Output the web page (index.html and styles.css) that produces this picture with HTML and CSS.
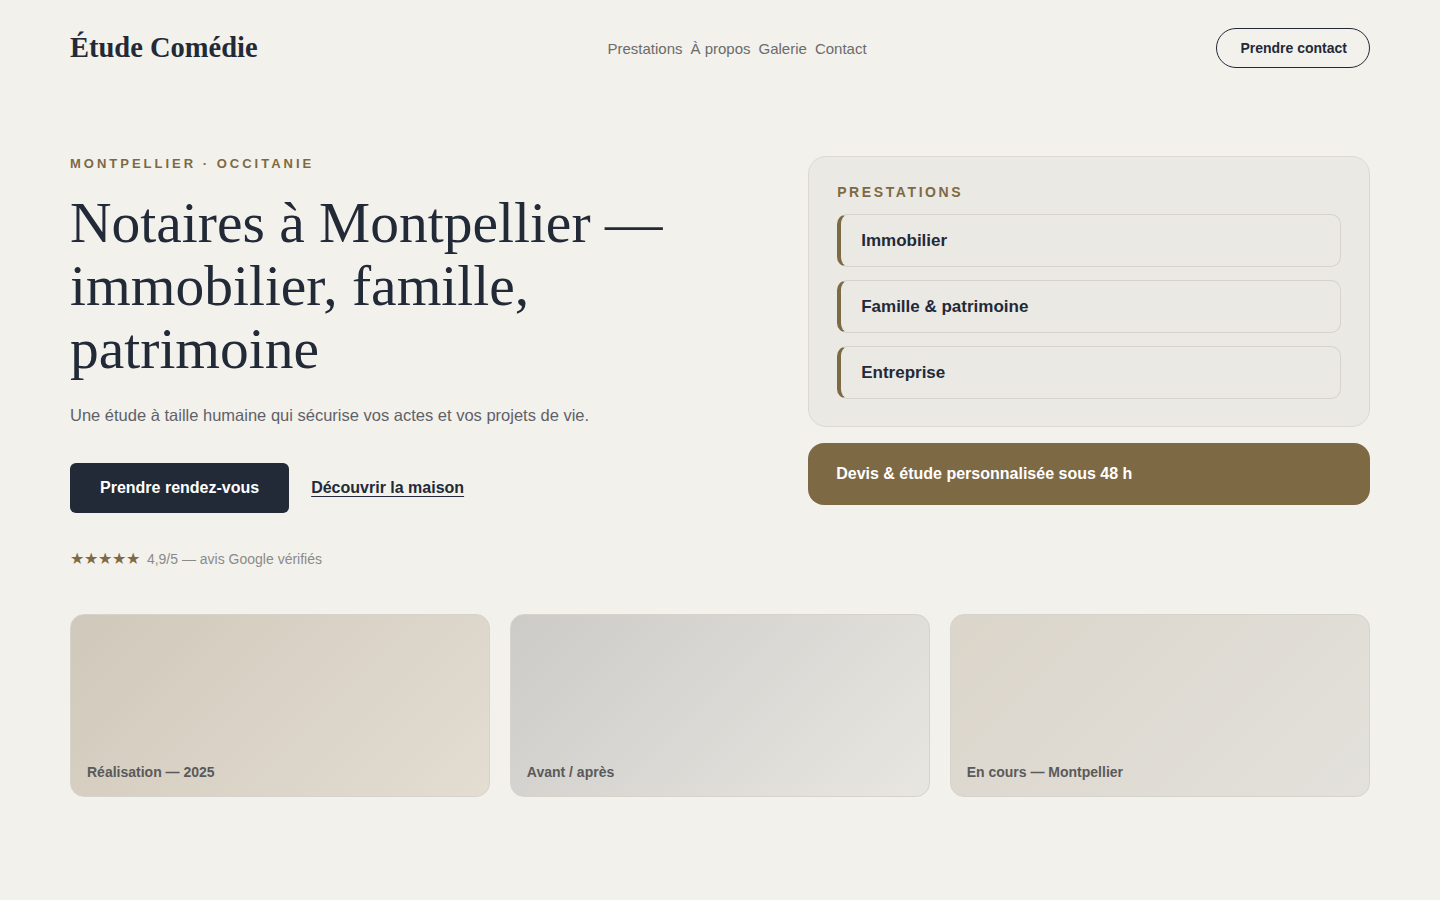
FILE: index.html
```html
<!DOCTYPE html>
<html lang="fr">
<head>
    <meta charset="UTF-8">
    <title>Étude Comédie — Notaires à Montpellier</title>
    <link rel="stylesheet" href="styles.css">
</head>
<body>
    <div class="page">
        <header class="top">
            <a class="brand" href="#">Étude Comédie</a>
            <nav class="nav">
                <a href="#">Prestations</a>
                <a href="#">À propos</a>
                <a href="#">Galerie</a>
                <a href="#">Contact</a>
            </nav>
            <a class="btn-outline" href="#">Prendre contact</a>
        </header>

        <section class="hero">
            <div class="hero-text">
                <p class="eyebrow">Montpellier · Occitanie</p>
                <h1>Notaires à Montpellier — immobilier, famille, patrimoine</h1>
                <p class="lead">Une étude à taille humaine qui sécurise vos actes et vos projets de vie.</p>
                <div class="actions">
                    <a class="btn-dark" href="#">Prendre rendez-vous</a>
                    <a class="link" href="#">Découvrir la maison</a>
                </div>
                <p class="rating"><span class="stars">★★★★★</span> 4,9/5 — avis Google vérifiés</p>
            </div>

            <aside class="side">
                <div class="services">
                    <p class="services-title">Prestations</p>
                    <div class="service">Immobilier</div>
                    <div class="service">Famille &amp; patrimoine</div>
                    <div class="service">Entreprise</div>
                </div>
                <div class="promo">Devis &amp; étude personnalisée sous 48 h</div>
            </aside>
        </section>

        <section class="gallery">
            <div class="tile tile-a"><span>Réalisation — 2025</span></div>
            <div class="tile tile-b"><span>Avant / après</span></div>
            <div class="tile tile-c"><span>En cours — Montpellier</span></div>
        </section>
    </div>
</body>
</html>
```

FILE: styles.css
```css
body { margin: 0; background: #f3f1ec; color: #222a38; font-family: "Liberation Sans", Arial, sans-serif; }
a { color: inherit; text-decoration: none; }
p { margin: 0; }

.page { width: 1300px; margin: 0 auto; }

/* header */
.top { display: flex; align-items: center; justify-content: space-between; height: 96px; }
.brand { font-family: "Liberation Serif", Georgia, serif; font-weight: bold; font-size: 28.5px; }
.nav { display: flex; gap: 8px; font-size: 15px; color: #6b6b6b; }
.btn-outline { font-size: 14px; font-weight: bold; border: 1px solid #222a38; border-radius: 20px; padding: 11px 22px 11px 23px; }

/* hero */
.hero { display: grid; grid-template-columns: 1.2fr 1fr; gap: 64px; padding-top: 60px; }
.eyebrow { font-size: 13px; font-weight: bold; letter-spacing: 3px; text-transform: uppercase; color: #7d6a45; }
.hero h1 { font-family: "Liberation Serif", Georgia, serif; font-weight: normal; font-size: 57.5px; line-height: 63px; margin: 20px 0 26px; }
.lead { font-size: 16.5px; color: #5f6168; }
.actions { display: flex; align-items: center; gap: 22px; margin-top: 38px; }
.btn-dark { background: #222a38; color: #fff; font-weight: bold; font-size: 16px; padding: 16px 30px; border-radius: 6px; }
.link { font-weight: bold; font-size: 16px; text-decoration: underline; text-underline-offset: 3px; }
.rating { margin-top: 37px; font-size: 14px; color: #8a8a8a; }
.stars { color: #7d6a45; font-size: 15.5px; margin-right: 3px; }

.side { display: flex; flex-direction: column; gap: 16px; }
.services { background: #ebe9e4; border: 1px solid #dcd9d2; border-radius: 18px; padding: 27px 28px; display: flex; flex-direction: column; gap: 13px; }
.services-title { font-size: 14px; font-weight: bold; letter-spacing: 2.6px; text-transform: uppercase; color: #7d6a45; margin-bottom: 1px; }
.service { box-sizing: border-box; height: 53px; display: flex; align-items: center; border: 1px solid #d6d3cc; border-left: 4px solid #7d6a45; border-radius: 10px; padding: 0 20px; font-size: 17px; font-weight: bold; }
.promo { background: #7d6a45; color: #fff; font-size: 16px; font-weight: bold; border-radius: 16px; padding: 22px 28px; }

/* gallery */
.gallery { display: grid; grid-template-columns: repeat(3, 1fr); gap: 19.5px; margin-top: 46px; }
.tile { box-sizing: border-box; height: 183px; border: 1px solid #d6d3cc; border-radius: 14px; display: flex; align-items: flex-end; padding: 0 16px 16px; }
.tile span { font-size: 14px; font-weight: bold; color: #5a5a5a; }
.tile-a { background: linear-gradient(135deg, #d0c8ba, #e3ddd2); }
.tile-b { background: linear-gradient(135deg, #cccbc7, #e8e6e1); }
.tile-c { background: linear-gradient(135deg, #dbd5ca, #e3e1dc); }
```
